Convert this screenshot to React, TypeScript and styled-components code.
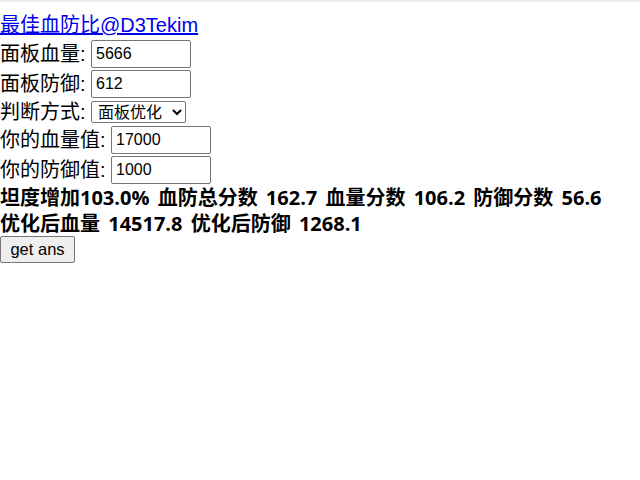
import React from "react";
import styled, { createGlobalStyle } from "styled-components";

const Global = createGlobalStyle`
  body {
    margin: 0;
    border-top: 2px solid #ececec;
    font-family: "Liberation Sans", "Noto Sans CJK SC", sans-serif;
    font-size: 20px;
    color: #000;
    background: #fff;
  }
`;

const Page = styled.div`
  display: flex;
  flex-direction: column;
  align-items: flex-start;
  padding-top: 9px;
`;

const TitleLink = styled.a`
  color: #0000ee;
  text-decoration: underline;
  line-height: 28px;
`;

const Row = styled.div`
  display: flex;
  align-items: center;
  min-height: 26px;
`;

const Label = styled.span`
  margin-right: 5.5px;
  line-height: 26px;
`;

const Input = styled.input`
  box-sizing: border-box;
  width: 100px;
  height: 28px;
  margin: 1px 0;
  border: 1px solid #767676;
  border-radius: 2px;
  padding: 1px 4px;
  font-family: "Liberation Sans", sans-serif;
  font-size: 16px;
  color: #000;
`;

const Select = styled.select`
  box-sizing: border-box;
  width: 95px;
  height: 22px;
  border: 1px solid #767676;
  border-radius: 2px;
  padding: 0 0 0 2px;
  font-family: "Liberation Sans", "Noto Sans CJK SC", sans-serif;
  font-size: 16px;
  color: #000;
  background: #fff;
`;

const Result = styled.b`
  display: block;
  font-family: "Open Sans", "Noto Sans CJK SC", sans-serif;
  font-weight: 700;
  word-spacing: 3px;
  line-height: 25.5px;
`;

const Button = styled.button`
  box-sizing: border-box;
  width: 75px;
  height: 27px;
  padding: 1px 6px;
  border: 1px solid #767676;
  border-radius: 2px;
  background: #efefef;
  font-family: "Liberation Sans", sans-serif;
  font-size: 16.5px;
  color: #000;
`;

export default function App() {
  return (
    <>
      <Global />
      <Page>
        <TitleLink href="#">最佳血防比@D3Tekim</TitleLink>
        <Row>
          <Label>面板血量:</Label>
          <Input defaultValue="5666" />
        </Row>
        <Row>
          <Label>面板防御:</Label>
          <Input defaultValue="612" />
        </Row>
        <Row>
          <Label>判断方式:</Label>
          <Select defaultValue="a">
            <option value="a">面板优化</option>
          </Select>
        </Row>
        <Row>
          <Label>你的血量值:</Label>
          <Input defaultValue="17000" />
        </Row>
        <Row>
          <Label>你的防御值:</Label>
          <Input defaultValue="1000" />
        </Row>
        <Result>坦度增加103.0% 血防总分数 162.7 血量分数 106.2 防御分数 56.6</Result>
        <Result>优化后血量 14517.8 优化后防御 1268.1</Result>
        <Button>get ans</Button>
      </Page>
    </>
  );
}
